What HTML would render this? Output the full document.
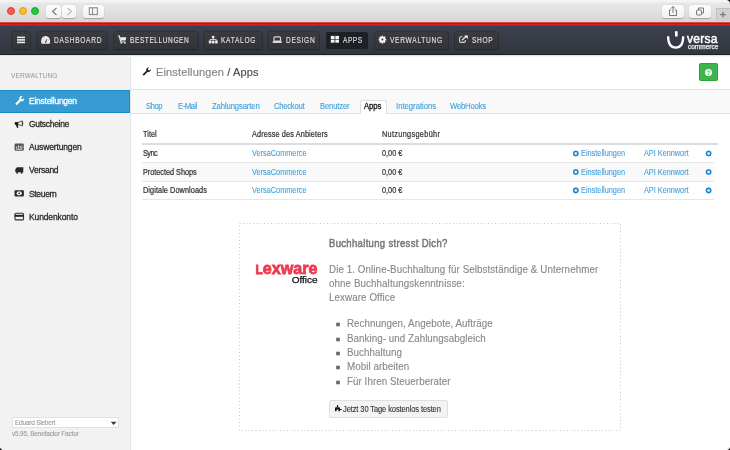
<!DOCTYPE html>
<html><head><meta charset="utf-8">
<style>
*{margin:0;padding:0;box-sizing:border-box}
html,body{width:730px;height:450px;overflow:hidden;background:#fff;font-family:"Liberation Sans",sans-serif;position:relative}
.a{position:absolute}
.t{position:absolute;white-space:nowrap;line-height:1;will-change:transform}
.dot{position:absolute;width:8px;height:8px;border-radius:50%}
.sbtn{position:absolute;top:5px;height:13px;background:linear-gradient(#fdfdfd,#f1f1f1);border-radius:3px;box-shadow:0 0.5px 1px rgba(0,0,0,.25)}
.nb{position:absolute;top:32px;height:16.5px;background:linear-gradient(#3a3b3e,#333437);border-radius:2px;box-shadow:0 0 0 0.6px #26282c,0 1px 1px rgba(0,0,0,.3)}
</style></head><body>
<div class="a" style="left:0;top:0;width:730px;height:21px;background:linear-gradient(#f4f4f4 0px,#f4f4f4 1.5px,#e9e8e9 3px,#d8d7d8 21px)"></div>
<div class="a" style="left:0;top:21px;width:730px;height:1px;background:#c9dbe2"></div>
<div class="a" style="left:0;top:22px;width:730px;height:1px;background:#d44a4a"></div><div class="a" style="left:0;top:23px;width:730px;height:1px;background:#dc0808"></div><div class="a" style="left:0;top:24px;width:730px;height:1px;background:#e41a1a"></div>
<div class="dot" style="left:7px;top:7px;background:#fc5753;border:0.5px solid #de3f3a"></div>
<div class="dot" style="left:19px;top:7px;background:#fdbb2d;border:0.5px solid #dfa023"></div>
<div class="dot" style="left:31px;top:7px;background:#27c840;border:0.5px solid #1aab29"></div>
<div class="sbtn" style="left:46px;width:15px"></div>
<div class="sbtn" style="left:62px;width:14px"></div>
<div class="sbtn" style="left:83px;width:21px"></div>
<div class="sbtn" style="left:662px;width:22px"></div>
<div class="sbtn" style="left:689px;width:22px"></div>
<div class="a" style="left:716px;top:8px;width:14px;height:13px;background:#d0d0d0;border-left:1px solid #c0c0c0;border-top:1px solid #c0c0c0"></div>
<svg class="a" style="left:0;top:0" width="730" height="22">
 <path d="M56.5 8 L52.5 11.5 L56.5 15" fill="none" stroke="#777" stroke-width="1.1"/>
 <path d="M67.5 8 L71.5 11.5 L67.5 15" fill="none" stroke="#bbb" stroke-width="1.1"/>
 <rect x="89.3" y="7.8" width="8" height="6.8" fill="none" stroke="#808080" stroke-width="1"/>
 <line x1="92.6" y1="7.8" x2="92.6" y2="14.6" stroke="#808080" stroke-width="1"/>
 <path d="M671 10 L669.5 10 L669.5 15.5 L676.5 15.5 L676.5 10 L675 10" fill="none" stroke="#777" stroke-width="1"/>
 <path d="M673 13 L673 6.5 M671 8.5 L673 6.5 L675 8.5" fill="none" stroke="#777" stroke-width="1"/>
 <rect x="696.5" y="10" width="5" height="5" rx="1" fill="none" stroke="#777" stroke-width="1"/>
 <path d="M698.5 10 L698.5 8 L703.5 8 L703.5 13 L701.5 13" fill="none" stroke="#777" stroke-width="1"/>
 <path d="M723 11.8 L723 17.6 M720.1 14.7 L725.9 14.7" stroke="#7a7a7a" stroke-width="1.3"/>
 <path d="M727 0 H730 V3 Q729.5 0.5 727 0 Z" fill="#111"/>
</svg>
<div class="a" style="left:0;top:26px;width:730px;height:29px;background:linear-gradient(#3c414c,#30353e)"></div>
<div class="a" style="left:0;top:25px;width:730px;height:1px;background:#a02830"></div>
<div class="a" style="left:0;top:26px;width:730px;height:1px;background:#27495a"></div>
<div class="a" style="left:0;top:54px;width:730px;height:1px;background:#1c1f27"></div>
<div class="a" style="left:0;top:55px;width:730px;height:2px;background:linear-gradient(#d8d8d8,#fff)"></div>
<div class="nb" style="left:12px;width:18px"></div>
<svg class="a" style="left:16.5px;top:36px" width="9" height="8"><rect x="0" y="0.6" width="8" height="1.6" fill="#eee"/><rect x="0" y="3.1" width="8" height="1.6" fill="#eee"/><rect x="0" y="5.6" width="8" height="1.6" fill="#eee"/></svg>
<div class="nb" style="left:36.5px;width:70px"></div>
<div class="t" style="left:53.7px;top:38px;font-size:6.6px;color:#e0e0e0;letter-spacing:0.71px;-webkit-text-stroke:0.1px #e0e0e0;transform:scaleY(1.25);transform-origin:0 5px;">DASHBOARD</div>
<div class="nb" style="left:113.5px;width:84px"></div>
<div class="t" style="left:130.3px;top:38px;font-size:6.6px;color:#e0e0e0;letter-spacing:0.55px;-webkit-text-stroke:0.1px #e0e0e0;transform:scaleY(1.25);transform-origin:0 5px;">BESTELLUNGEN</div>
<div class="nb" style="left:203.5px;width:58px"></div>
<div class="t" style="left:221.2px;top:38px;font-size:6.6px;color:#e0e0e0;letter-spacing:0.72px;-webkit-text-stroke:0.1px #e0e0e0;transform:scaleY(1.25);transform-origin:0 5px;">KATALOG</div>
<div class="nb" style="left:268.3px;width:51px"></div>
<div class="t" style="left:285.6px;top:38px;font-size:6.6px;color:#e0e0e0;letter-spacing:0.68px;-webkit-text-stroke:0.1px #e0e0e0;transform:scaleY(1.25);transform-origin:0 5px;">DESIGN</div>
<div class="nb" style="left:326px;width:42px;background:#1d2025;box-shadow:none"></div>
<div class="t" style="left:342.9px;top:38px;font-size:6.6px;color:#e0e0e0;letter-spacing:0.5px;-webkit-text-stroke:0.1px #e0e0e0;transform:scaleY(1.25);transform-origin:0 5px;">APPS</div>
<div class="nb" style="left:374.5px;width:73px"></div>
<div class="t" style="left:389.6px;top:38px;font-size:6.6px;color:#e0e0e0;letter-spacing:0.72px;-webkit-text-stroke:0.1px #e0e0e0;transform:scaleY(1.25);transform-origin:0 5px;">VERWALTUNG</div>
<div class="nb" style="left:454.6px;width:43px"></div>
<div class="t" style="left:471.5px;top:38px;font-size:6.6px;color:#e0e0e0;letter-spacing:0.67px;-webkit-text-stroke:0.1px #e0e0e0;transform:scaleY(1.25);transform-origin:0 5px;">SHOP</div>
<svg class="a" style="left:0;top:0" width="730" height="55">
 <path d="M41.6 43.7 C40.2 40.2 42 35.9 45.6 35.9 C49.2 35.9 51 40.2 49.6 43.7 Z" fill="#eeeeee"/>
 <path d="M45.6 42.2 L46.9 39.2" stroke="#3a3b3e" stroke-width="0.9"/><circle cx="45.6" cy="42" r="0.8" fill="#3a3b3e"/>
 <circle cx="43" cy="40" r="0.45" fill="#777"/><circle cx="44.3" cy="38" r="0.45" fill="#777"/><circle cx="48.3" cy="40" r="0.45" fill="#777"/><circle cx="41.9" cy="42.4" r="0.45" fill="#888"/>
 <path d="M117.9 36 L119.3 36 L120.8 42 L125.5 42" fill="none" stroke="#ececec" stroke-width="1.2"/>
 <path d="M120 37.2 H126.3 L125.6 40.6 H120.8 Z" fill="#ececec"/>
 <circle cx="121.3" cy="43.1" r="0.8" fill="#ececec"/><circle cx="125" cy="43.1" r="0.8" fill="#ececec"/>
 <rect x="211.9" y="35.9" width="2.5" height="2.3" fill="#ececec"/>
 <path d="M213.15 38 V39.5 M210 41 V39.5 H216.3 V41" stroke="#ececec" stroke-width="0.8" fill="none"/>
 <rect x="208.8" y="40.6" width="2.6" height="2.8" fill="#ececec"/><rect x="211.9" y="40.6" width="2.6" height="2.8" fill="#ececec"/><rect x="215.1" y="40.6" width="2.6" height="2.8" fill="#ececec"/>
 <rect x="274" y="36.8" width="6.5" height="4.4" rx="1" fill="none" stroke="#d8d8d8" stroke-width="1.2"/>
 <rect x="272.7" y="41.2" width="9" height="1.7" fill="#e8e8e8"/>
 <rect x="330.8" y="35.9" width="3.7" height="3.1" fill="#f4f4f4"/><rect x="335.3" y="35.9" width="3.7" height="3.1" fill="#f4f4f4"/>
 <rect x="330.8" y="39.6" width="3.7" height="3.1" fill="#f4f4f4"/><rect x="335.3" y="39.6" width="3.7" height="3.1" fill="#f4f4f4"/>
 <g transform="translate(382.4 39.6)"><circle r="2.9" fill="#f4f4f4"/><path d="M-0.9 -3.8 h1.8 v7.6 h-1.8z M-3.8 -0.9 v1.8 h7.6 v-1.8z" fill="#f4f4f4"/><path d="M-0.9 -3.8 h1.8 v7.6 h-1.8z M-3.8 -0.9 v1.8 h7.6 v-1.8z" fill="#f4f4f4" transform="rotate(45)"/><circle r="1" fill="#35373a"/></g>
 <path d="M462.5 36.8 H460.8 Q459.6 36.8 459.6 38 V41.2 Q459.6 42.4 460.8 42.4 H464 Q465.3 42.4 465.3 41.2 V40" fill="none" stroke="#d8d8d8" stroke-width="1.1"/>
 <path d="M462 40.2 L466.3 36" stroke="#e8e8e8" stroke-width="1.3"/><path d="M464.3 35.4 H467.8 V38.9 Z" fill="#f4f4f4"/>
 <path d="M668.1 36.3 C668.2 44.5 670.8 47.7 675.8 47.7 C680.8 47.7 683.1 44.5 683.2 36.3" fill="none" stroke="#fff" stroke-width="2.3"/>
 <rect x="675" y="31.2" width="2.6" height="5.3" fill="#fff"/>
</svg>
<div class="t" style="left:687.3px;top:33px;font-size:12px;color:#fff;letter-spacing:0.3px;-webkit-text-stroke:0.5px #fff;">versa</div>
<div class="t" style="left:688px;top:44px;font-size:6.5px;color:#f0f0f0;-webkit-text-stroke:0.25px #f0f0f0;">commerce</div>
<div class="a" style="left:0;top:57px;width:131px;height:393px;background:#f2f2f2;border-right:1px solid #e1e4ea"></div>
<div class="t" style="left:11px;top:73px;font-size:6.6px;color:#999;letter-spacing:0.08px;-webkit-text-stroke:0.05px #999;transform:scaleY(1.12);transform-origin:0 5px;">VERWALTUNG</div>
<div class="a" style="left:0;top:90px;width:130px;height:23px;background:#369bd2;border-top:1px solid #1f8cca;border-bottom:1px solid #1f8cca;border-right:1px solid #1f8cca"></div>
<div class="t" style="left:28.8px;top:97px;font-size:8.5px;color:#fff;letter-spacing:-0.25px;-webkit-text-stroke:0.28px #fff;transform:scaleY(1.1);transform-origin:0 7px;">Einstellungen</div>
<div class="t" style="left:28.8px;top:120px;font-size:8.5px;color:#2a2a2a;letter-spacing:-0.3px;-webkit-text-stroke:0.28px #2a2a2a;transform:scaleY(1.1);transform-origin:0 7px;">Gutscheine</div>
<div class="t" style="left:28.8px;top:143px;font-size:8.5px;color:#2a2a2a;letter-spacing:-0.15px;-webkit-text-stroke:0.28px #2a2a2a;transform:scaleY(1.1);transform-origin:0 7px;">Auswertungen</div>
<div class="t" style="left:28.8px;top:166px;font-size:8.5px;color:#2a2a2a;letter-spacing:-0.27px;-webkit-text-stroke:0.28px #2a2a2a;transform:scaleY(1.1);transform-origin:0 7px;">Versand</div>
<div class="t" style="left:28.8px;top:190px;font-size:8.5px;color:#2a2a2a;letter-spacing:-0.33px;-webkit-text-stroke:0.28px #2a2a2a;transform:scaleY(1.1);transform-origin:0 7px;">Steuern</div>
<div class="t" style="left:28.8px;top:213px;font-size:8.5px;color:#2a2a2a;letter-spacing:-0.12px;-webkit-text-stroke:0.28px #2a2a2a;transform:scaleY(1.1);transform-origin:0 7px;">Kundenkonto</div>
<svg class="a" style="left:0;top:90px" width="30" height="140">
 <path d="M15.3 13.6 L19.4 9.5 C18.7 7.4 20.4 5.6 22.6 6.2 L21 7.8 L21.4 9 L22.6 9.4 L24.1 7.9 C24.6 10.1 22.8 11.8 20.7 11.2 L16.6 15.3 Z" fill="#fff"/>
 <rect x="14.8" y="32.1" width="3.3" height="2.7" fill="#111"/><path d="M15.7 34.6 L17 37.7 H18.4 L17.8 34.6 Z" fill="#111"/>
 <path d="M18 32.6 L22.4 30.9 V35.9 L18 34.4" fill="none" stroke="#333" stroke-width="0.85"/><rect x="22" y="32.4" width="1.2" height="2" fill="#333"/>
 <rect x="14.6" y="53.6" width="9.2" height="7.2" rx="1.2" fill="#555"/>
 <path d="M16.2 59.3 H22.3 M16.6 58.5 V56.5 M18.4 58.5 V55.2 M20.2 58.5 V56 M21.9 58.5 V55.5" stroke="#f0f0f0" stroke-width="0.8"/>
 <path d="M18.2 77.3 H23.3 V82.3 H15.3 V79.5 L16.8 77.3 Z" fill="#2a2a2a"/><circle cx="17.2" cy="82.8" r="1" fill="#2a2a2a"/><circle cx="21.6" cy="82.8" r="1" fill="#2a2a2a"/>
 <rect x="14.5" y="100.2" width="9.4" height="6.2" rx="0.8" fill="#2a2a2a"/><ellipse cx="19.2" cy="103.3" rx="2.6" ry="2.1" fill="#f2f2f2"/><circle cx="19.2" cy="103.3" r="0.9" fill="#2a2a2a"/>
 <rect x="15" y="123.3" width="8.5" height="6.6" rx="1" fill="none" stroke="#333" stroke-width="1.1"/><rect x="14.6" y="124.8" width="9.2" height="2" fill="#222"/>
</svg>
<div class="a" style="left:12px;top:417px;width:106.5px;height:11px;background:#fff;border:1px solid #e0e0e0"></div>
<div class="t" style="left:14.5px;top:420px;font-size:6.5px;color:#999;letter-spacing:-0.23px;-webkit-text-stroke:0.1px #999;">Eduard Siebert</div>
<svg class="a" style="left:110px;top:421px" width="8" height="5"><path d="M0.8 0.8 H6.5 L3.65 4 Z" fill="#333"/></svg>
<div class="t" style="left:11.7px;top:431px;font-size:6.5px;color:#999;letter-spacing:-0.19px;-webkit-text-stroke:0.1px #999;">v5.95, Benefactor Factor</div>
<div class="a" style="left:131px;top:89px;width:599px;height:1px;background:#e2e2e2"></div>
<div class="a" style="left:131px;top:90px;width:599px;height:24px;background:#f9f9f9;border-bottom:1px solid #e2e2e2"></div>
<svg class="a" style="left:142px;top:67px" width="10" height="10"><path d="M0.5 7.5 L4.3 3.7 C3.7 1.8 5.2 0 7.2 0.5 L5.9 1.8 L6.3 3 L7.5 3.4 L8.8 2.1 C9.3 4 7.5 5.6 5.6 5 L1.8 8.8 Z" fill="#222"/></svg>
<div class="t" style="left:155.8px;top:67px;font-size:11px;color:#888;letter-spacing:0.15px;-webkit-text-stroke:0.2px #888;">Einstellungen <span style="color:#333">/ Apps</span></div>
<div class="a" style="left:699px;top:63px;width:19px;height:18px;background:#3db54a;border:1px solid #2aa53a;border-radius:1.5px"></div>
<svg class="a" style="left:704px;top:67.5px;will-change:transform" width="9" height="9"><circle cx="4.5" cy="4.5" r="3.5" fill="#fff"/><path d="M3.3 3.6 C3.3 2.6 5.8 2.4 5.8 3.6 C5.8 4.4 4.6 4.5 4.6 5.4" fill="none" stroke="#3db54a" stroke-width="1"/><rect x="4.1" y="6" width="1" height="1" fill="#3db54a"/></svg>
<div class="a" style="left:360px;top:100px;width:26.5px;height:14px;background:#fff;border:1px solid #e0e0e0;border-bottom:none;border-radius:2px 2px 0 0"></div>
<div class="t" style="left:146.4px;top:103px;font-size:7.7px;color:#42a0d9;letter-spacing:-0.47px;-webkit-text-stroke:0.1px #42a0d9;transform:scaleY(1.18);transform-origin:0 6px;">Shop</div>
<div class="t" style="left:177.8px;top:103px;font-size:7.7px;color:#42a0d9;letter-spacing:-0.5px;-webkit-text-stroke:0.1px #42a0d9;transform:scaleY(1.18);transform-origin:0 6px;">E-Mail</div>
<div class="t" style="left:212.10000000000002px;top:103px;font-size:7.7px;color:#42a0d9;letter-spacing:-0.12px;-webkit-text-stroke:0.1px #42a0d9;transform:scaleY(1.18);transform-origin:0 6px;">Zahlungsarten</div>
<div class="t" style="left:274.2px;top:103px;font-size:7.7px;color:#42a0d9;letter-spacing:-0.27px;-webkit-text-stroke:0.1px #42a0d9;transform:scaleY(1.18);transform-origin:0 6px;">Checkout</div>
<div class="t" style="left:319.6px;top:103px;font-size:7.7px;color:#42a0d9;letter-spacing:-0.17px;-webkit-text-stroke:0.1px #42a0d9;transform:scaleY(1.18);transform-origin:0 6px;">Benutzer</div>
<div class="t" style="left:363.90000000000003px;top:103px;font-size:7.7px;color:#222;letter-spacing:-0.1px;-webkit-text-stroke:0.3px #222;transform:scaleY(1.18);transform-origin:0 6px;">Apps</div>
<div class="t" style="left:396.1px;top:103px;font-size:7.7px;color:#42a0d9;-webkit-text-stroke:0.1px #42a0d9;transform:scaleY(1.18);transform-origin:0 6px;">Integrations</div>
<div class="t" style="left:450.2px;top:103px;font-size:7.7px;color:#42a0d9;letter-spacing:-0.2px;-webkit-text-stroke:0.1px #42a0d9;transform:scaleY(1.18);transform-origin:0 6px;">WebHooks</div>
<div class="t" style="left:142.5px;top:131px;font-size:7.3px;color:#333;letter-spacing:0.05px;-webkit-text-stroke:0.2px #333;transform:scaleY(1.14);transform-origin:0 6px;">Titel</div>
<div class="t" style="left:252px;top:131px;font-size:7.3px;color:#333;letter-spacing:0.13px;-webkit-text-stroke:0.2px #333;transform:scaleY(1.14);transform-origin:0 6px;">Adresse des Anbieters</div>
<div class="t" style="left:381.8px;top:131px;font-size:7.3px;color:#333;letter-spacing:0.33px;-webkit-text-stroke:0.2px #333;transform:scaleY(1.14);transform-origin:0 6px;">Nutzungsgebühr</div>
<div class="a" style="left:142px;top:143px;width:576px;height:2px;background:#ddd"></div>
<div class="a" style="left:142px;top:163px;width:572px;height:18px;background:#f9f9f9"></div>
<div class="a" style="left:142px;top:162px;width:572px;height:1px;background:#e6e6e6"></div>
<div class="a" style="left:142px;top:181px;width:572px;height:1px;background:#e6e6e6"></div>
<div class="a" style="left:142px;top:199px;width:572px;height:1px;background:#e6e6e6"></div>
<div class="t" style="left:142.5px;top:150px;font-size:7.3px;color:#333;letter-spacing:-0.53px;-webkit-text-stroke:0.2px #333;transform:scaleY(1.14);transform-origin:0 6px;">Sync</div>
<div class="t" style="left:252px;top:150px;font-size:7.3px;color:#42a0d9;letter-spacing:0.02px;-webkit-text-stroke:0.08px #42a0d9;transform:scaleY(1.14);transform-origin:0 6px;">VersaCommerce</div>
<div class="t" style="left:381.8px;top:150px;font-size:7.3px;color:#333;-webkit-text-stroke:0.2px #333;transform:scaleY(1.14);transform-origin:0 6px;">0,00 €</div>
<div class="t" style="left:581px;top:150px;font-size:7.3px;color:#42a0d9;letter-spacing:0.02px;-webkit-text-stroke:0.08px #42a0d9;transform:scaleY(1.14);transform-origin:0 6px;">Einstellungen</div>
<div class="t" style="left:643.8px;top:150px;font-size:7.3px;color:#42a0d9;-webkit-text-stroke:0.08px #42a0d9;transform:scaleY(1.14);transform-origin:0 6px;">API Kennwort</div>
<div class="t" style="left:142.5px;top:169px;font-size:7.3px;color:#333;letter-spacing:-0.02px;-webkit-text-stroke:0.2px #333;transform:scaleY(1.14);transform-origin:0 6px;">Protected Shops</div>
<div class="t" style="left:252px;top:169px;font-size:7.3px;color:#42a0d9;letter-spacing:0.02px;-webkit-text-stroke:0.08px #42a0d9;transform:scaleY(1.14);transform-origin:0 6px;">VersaCommerce</div>
<div class="t" style="left:381.8px;top:169px;font-size:7.3px;color:#333;-webkit-text-stroke:0.2px #333;transform:scaleY(1.14);transform-origin:0 6px;">0,00 €</div>
<div class="t" style="left:581px;top:169px;font-size:7.3px;color:#42a0d9;letter-spacing:0.02px;-webkit-text-stroke:0.08px #42a0d9;transform:scaleY(1.14);transform-origin:0 6px;">Einstellungen</div>
<div class="t" style="left:643.8px;top:169px;font-size:7.3px;color:#42a0d9;-webkit-text-stroke:0.08px #42a0d9;transform:scaleY(1.14);transform-origin:0 6px;">API Kennwort</div>
<div class="t" style="left:142.5px;top:187px;font-size:7.3px;color:#333;letter-spacing:0.08px;-webkit-text-stroke:0.2px #333;transform:scaleY(1.14);transform-origin:0 6px;">Digitale Downloads</div>
<div class="t" style="left:252px;top:187px;font-size:7.3px;color:#42a0d9;letter-spacing:0.02px;-webkit-text-stroke:0.08px #42a0d9;transform:scaleY(1.14);transform-origin:0 6px;">VersaCommerce</div>
<div class="t" style="left:381.8px;top:187px;font-size:7.3px;color:#333;-webkit-text-stroke:0.2px #333;transform:scaleY(1.14);transform-origin:0 6px;">0,00 €</div>
<div class="t" style="left:581px;top:187px;font-size:7.3px;color:#42a0d9;letter-spacing:0.02px;-webkit-text-stroke:0.08px #42a0d9;transform:scaleY(1.14);transform-origin:0 6px;">Einstellungen</div>
<div class="t" style="left:643.8px;top:187px;font-size:7.3px;color:#42a0d9;-webkit-text-stroke:0.08px #42a0d9;transform:scaleY(1.14);transform-origin:0 6px;">API Kennwort</div>
<svg class="a" style="left:560px;top:140px" width="170" height="60">
 
 <g transform="translate(15.8 13.5)"><circle r="2.05" fill="none" stroke="#1f8ad0" stroke-width="1.5"/><path d="M-0.55 -2.9 h1.1 v5.8 h-1.1z M-2.9 -0.55 v1.1 h5.8 v-1.1z" fill="#1f8ad0"/><path d="M-0.55 -2.9 h1.1 v5.8 h-1.1z M-2.9 -0.55 v1.1 h5.8 v-1.1z" fill="#1f8ad0" transform="rotate(45)"/><circle r="1.2" fill="#fff"/></g><g transform="translate(15.8 32)"><circle r="2.05" fill="none" stroke="#1f8ad0" stroke-width="1.5"/><path d="M-0.55 -2.9 h1.1 v5.8 h-1.1z M-2.9 -0.55 v1.1 h5.8 v-1.1z" fill="#1f8ad0"/><path d="M-0.55 -2.9 h1.1 v5.8 h-1.1z M-2.9 -0.55 v1.1 h5.8 v-1.1z" fill="#1f8ad0" transform="rotate(45)"/><circle r="1.2" fill="#fff"/></g><g transform="translate(15.8 50.4)"><circle r="2.05" fill="none" stroke="#1f8ad0" stroke-width="1.5"/><path d="M-0.55 -2.9 h1.1 v5.8 h-1.1z M-2.9 -0.55 v1.1 h5.8 v-1.1z" fill="#1f8ad0"/><path d="M-0.55 -2.9 h1.1 v5.8 h-1.1z M-2.9 -0.55 v1.1 h5.8 v-1.1z" fill="#1f8ad0" transform="rotate(45)"/><circle r="1.2" fill="#fff"/></g>
 <g transform="translate(148.6 13.5)"><circle r="2.05" fill="none" stroke="#1f8ad0" stroke-width="1.5"/><path d="M-0.55 -2.9 h1.1 v5.8 h-1.1z M-2.9 -0.55 v1.1 h5.8 v-1.1z" fill="#1f8ad0"/><path d="M-0.55 -2.9 h1.1 v5.8 h-1.1z M-2.9 -0.55 v1.1 h5.8 v-1.1z" fill="#1f8ad0" transform="rotate(45)"/><circle r="1.2" fill="#fff"/></g><g transform="translate(148.6 32)"><circle r="2.05" fill="none" stroke="#1f8ad0" stroke-width="1.5"/><path d="M-0.55 -2.9 h1.1 v5.8 h-1.1z M-2.9 -0.55 v1.1 h5.8 v-1.1z" fill="#1f8ad0"/><path d="M-0.55 -2.9 h1.1 v5.8 h-1.1z M-2.9 -0.55 v1.1 h5.8 v-1.1z" fill="#1f8ad0" transform="rotate(45)"/><circle r="1.2" fill="#fff"/></g><g transform="translate(148.6 50.4)"><circle r="2.05" fill="none" stroke="#1f8ad0" stroke-width="1.5"/><path d="M-0.55 -2.9 h1.1 v5.8 h-1.1z M-2.9 -0.55 v1.1 h5.8 v-1.1z" fill="#1f8ad0"/><path d="M-0.55 -2.9 h1.1 v5.8 h-1.1z M-2.9 -0.55 v1.1 h5.8 v-1.1z" fill="#1f8ad0" transform="rotate(45)"/><circle r="1.2" fill="#fff"/></g>
</svg>
<svg class="a" style="left:239px;top:223px" width="383" height="209"><rect x="0.5" y="0.5" width="381" height="207" fill="none" stroke="#c6c6c6" stroke-width="1" stroke-dasharray="1 2.5"/></svg>
<svg class="a" style="left:250px;top:258px;will-change:transform" width="75" height="30"><text y="15.9" font-family="Liberation Sans" font-weight="700" fill="#ee3a4e" stroke="#ee3a4e" stroke-width="0.8" textLength="62" lengthAdjust="spacingAndGlyphs" x="5.6"><tspan font-size="12.2">L</tspan><tspan font-size="16.6">exware</tspan></text><text x="41.7" y="25" font-family="Liberation Sans" font-size="9" fill="#111" stroke="#111" stroke-width="0.25" textLength="26" lengthAdjust="spacingAndGlyphs">Office</text></svg>
<div class="t" style="left:329.3px;top:239px;font-size:9.5px;color:#777;letter-spacing:0.33px;-webkit-text-stroke:0.45px #777;transform:scaleY(1.13);transform-origin:0 8px;">Buchhaltung stresst Dich?</div>
<div class="t" style="left:329.3px;top:265px;font-size:9.8px;color:#888;letter-spacing:0.08px;-webkit-text-stroke:0.12px #888;transform:scaleY(1.1);transform-origin:0 8px;">Die 1. Online-Buchhaltung für Selbstständige &amp; Unternehmer</div>
<div class="t" style="left:329.3px;top:279px;font-size:9.8px;color:#888;letter-spacing:0.08px;-webkit-text-stroke:0.12px #888;transform:scaleY(1.1);transform-origin:0 8px;">ohne Buchhaltungskenntnisse:</div>
<div class="t" style="left:329.3px;top:293px;font-size:9.8px;color:#888;letter-spacing:0.08px;-webkit-text-stroke:0.12px #888;transform:scaleY(1.1);transform-origin:0 8px;">Lexware Office</div>
<div class="t" style="left:347.2px;top:319px;font-size:9.8px;color:#888;letter-spacing:0.05px;-webkit-text-stroke:0.12px #888;transform:scaleY(1.1);transform-origin:0 8px;">Rechnungen, Angebote, Aufträge</div>
<div class="t" style="left:347.2px;top:334px;font-size:9.8px;color:#888;letter-spacing:0.05px;-webkit-text-stroke:0.12px #888;transform:scaleY(1.1);transform-origin:0 8px;">Banking- und Zahlungsabgleich</div>
<div class="t" style="left:347.2px;top:348px;font-size:9.8px;color:#888;letter-spacing:0.05px;-webkit-text-stroke:0.12px #888;transform:scaleY(1.1);transform-origin:0 8px;">Buchhaltung</div>
<div class="t" style="left:347.2px;top:362px;font-size:9.8px;color:#888;letter-spacing:0.05px;-webkit-text-stroke:0.12px #888;transform:scaleY(1.1);transform-origin:0 8px;">Mobil arbeiten</div>
<div class="t" style="left:347.2px;top:377px;font-size:9.8px;color:#888;letter-spacing:0.05px;-webkit-text-stroke:0.12px #888;transform:scaleY(1.1);transform-origin:0 8px;">Für Ihren Steuerberater</div>
<svg class="a" style="left:335px;top:320px" width="6" height="65"><rect x="1.2" y="2.7" width="3.6" height="3.6" fill="#666"/><rect x="1.2" y="17.7" width="3.6" height="3.6" fill="#666"/><rect x="1.2" y="31.7" width="3.6" height="3.6" fill="#666"/><rect x="1.2" y="45.7" width="3.6" height="3.6" fill="#666"/><rect x="1.2" y="60.7" width="3.6" height="3.6" fill="#666"/></svg>
<div class="a" style="left:329px;top:400px;width:118.5px;height:17.5px;background:#f3f3f3;border:1px solid #e0e0e0;border-radius:2px"></div>
<svg class="a" style="left:332px;top:402px" width="12" height="12"><rect x="4.9" y="3.2" width="1.3" height="2.2" fill="#111"/><path d="M3 9.2 V6.2 Q3 5.2 4 5.2 H7 Q8 5.2 8 6.2 V9.2 H6.4 V7.6 H4.6 V9.2 Z" fill="#111"/><rect x="7.6" y="7" width="2.2" height="1" fill="#222"/></svg>
<div class="t" style="left:342.5px;top:406px;font-size:7.5px;color:#333;letter-spacing:-0.1px;-webkit-text-stroke:0.1px #333;transform:scaleY(1.16);transform-origin:0 6px;">Jetzt 30 Tage kostenlos testen</div>
<svg class="a" style="left:0;top:446px" width="730" height="4"><path d="M0 1.5 Q0.6 3.4 2.5 4 H0 Z" fill="#111"/><path d="M730 1.5 Q729.4 3.4 727.5 4 H730 Z" fill="#111"/></svg>
</body></html>
